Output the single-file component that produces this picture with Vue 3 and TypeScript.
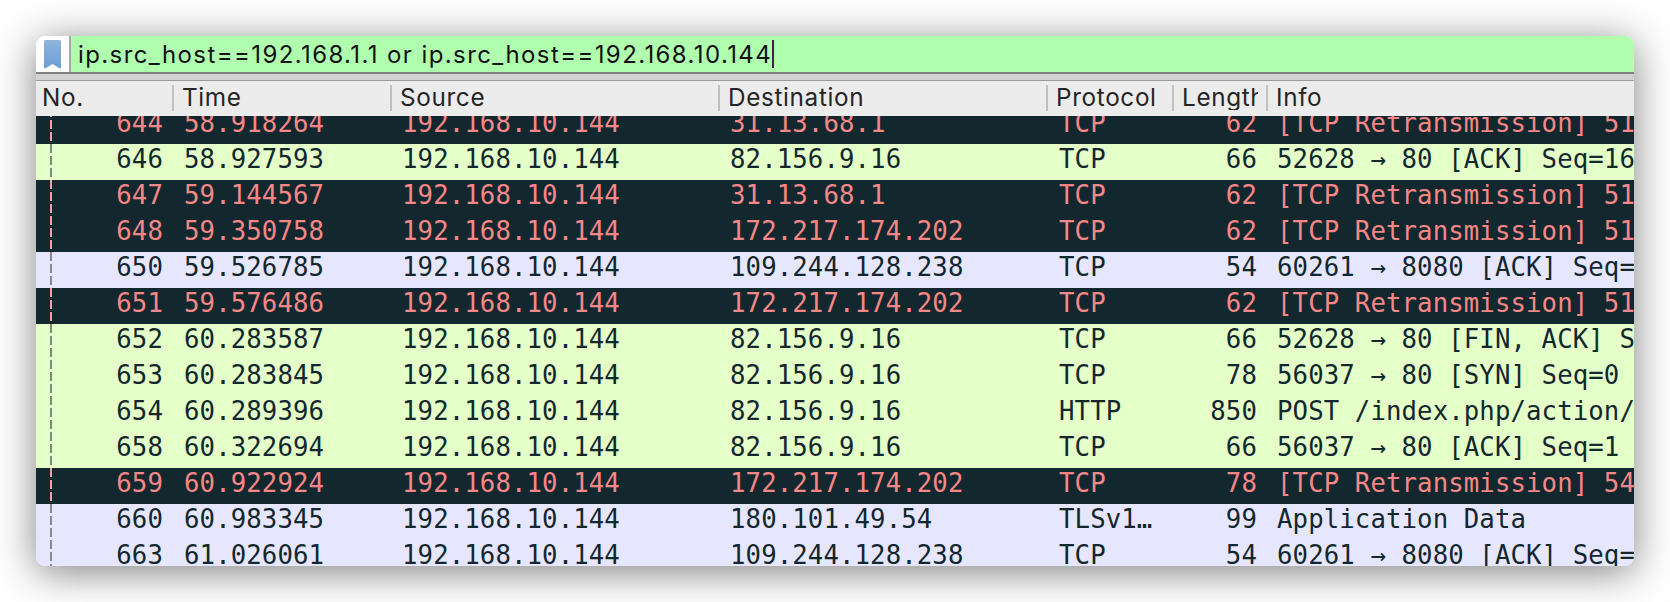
<template>
  <div class="page">
    <div class="window">
      <div class="filter-bar">
        <div class="bookmark">
          <svg width="17" height="29" viewBox="0 0 17 29">
            <defs>
              <linearGradient id="bm" x1="0" y1="0" x2="0" y2="1">
                <stop offset="0" stop-color="#8fb3dc" />
                <stop offset="1" stop-color="#6f9fd6" />
              </linearGradient>
            </defs>
            <path d="M1.5 0H15.500a1.500 1.500 0 0 1 1.500 1.500V27.500a1 1 0 0 1-1.500 .8L8.500 24 1.500 28.300A1 1 0 0 1 0 27.500V1.500A1.500 1.500 0 0 1 1.500 0Z" fill="url(#bm)" />
          </svg>
        </div>
        <div class="filter-input">
          <span>ip.src_host==192.168.1.1 or ip.src_host==192.168.10.144</span><i class="caret"></i>
        </div>
      </div>
      <div class="splitter"></div>
      <div class="head">
        <div v-for="c in columns" :key="c" class="head-cell">
          <span>{{ c }}</span>
        </div>
      </div>
      <div class="list">
        <div class="list-inner">
          <div v-for="p in packets" :key="p.no" class="row" :class="p.kind">
            <div class="cell num">{{ p.no }}</div>
            <div class="cell">{{ p.time }}</div>
            <div class="cell">{{ p.src }}</div>
            <div class="cell">{{ p.dst }}</div>
            <div class="cell proto">{{ p.proto }}</div>
            <div class="cell num">{{ p.len }}</div>
            <div class="cell info">{{ p.info }}</div>
          </div>
        </div>
      </div>
    </div>
  </div>
</template>

<script setup lang="ts">
type Kind = "bad" | "http" | "tcp";

interface Packet {
  no: number;
  time: string;
  src: string;
  dst: string;
  proto: string;
  len: number;
  info: string;
  kind: Kind;
}

const columns = ["No.", "Time", "Source", "Destination", "Protocol", "Length", "Info"];

const me = "192.168.10.144";
const packets: Packet[] = [
  { no: 644, time: "58.918264", src: me, dst: "31.13.68.1", proto: "TCP", len: 62, info: "[TCP Retransmission] 51", kind: "bad" },
  { no: 646, time: "58.927593", src: me, dst: "82.156.9.16", proto: "TCP", len: 66, info: "52628 → 80 [ACK] Seq=16", kind: "http" },
  { no: 647, time: "59.144567", src: me, dst: "31.13.68.1", proto: "TCP", len: 62, info: "[TCP Retransmission] 51", kind: "bad" },
  { no: 648, time: "59.350758", src: me, dst: "172.217.174.202", proto: "TCP", len: 62, info: "[TCP Retransmission] 51", kind: "bad" },
  { no: 650, time: "59.526785", src: me, dst: "109.244.128.238", proto: "TCP", len: 54, info: "60261 → 8080 [ACK] Seq=1", kind: "tcp" },
  { no: 651, time: "59.576486", src: me, dst: "172.217.174.202", proto: "TCP", len: 62, info: "[TCP Retransmission] 51", kind: "bad" },
  { no: 652, time: "60.283587", src: me, dst: "82.156.9.16", proto: "TCP", len: 66, info: "52628 → 80 [FIN, ACK] S", kind: "http" },
  { no: 653, time: "60.283845", src: me, dst: "82.156.9.16", proto: "TCP", len: 78, info: "56037 → 80 [SYN] Seq=0", kind: "http" },
  { no: 654, time: "60.289396", src: me, dst: "82.156.9.16", proto: "HTTP", len: 850, info: "POST /index.php/action/", kind: "http" },
  { no: 658, time: "60.322694", src: me, dst: "82.156.9.16", proto: "TCP", len: 66, info: "56037 → 80 [ACK] Seq=1", kind: "http" },
  { no: 659, time: "60.922924", src: me, dst: "172.217.174.202", proto: "TCP", len: 78, info: "[TCP Retransmission] 54", kind: "bad" },
  { no: 660, time: "60.983345", src: me, dst: "180.101.49.54", proto: "TLSv1…", len: 99, info: "Application Data", kind: "tcp" },
  { no: 663, time: "61.026061", src: me, dst: "109.244.128.238", proto: "TCP", len: 54, info: "60261 → 8080 [ACK] Seq=1", kind: "tcp" },
];
</script>

<style>
html,
body {
  margin: 0;
  background: #fff;
}
</style>

<style scoped>
.page {
  width: 1670px;
  height: 602px;
  padding: 36px;
  box-sizing: border-box;
  overflow: hidden;
}

.window {
  width: 1598px;
  height: 530px;
  border-radius: 9px;
  overflow: hidden;
  display: flex;
  flex-direction: column;
  box-shadow: 0 6px 40px rgba(0, 0, 0, 0.5);
  font-family: Inter, "Liberation Sans", sans-serif;
}

.filter-bar {
  height: 36px;
  display: flex;
  background: #afffaf;
  border-bottom: 2px solid #808080;
  flex: none;
}

.bookmark {
  width: 35px;
  background: #fff;
  border-right: 2px solid #a8a8a8;
  padding: 4px 0 0 8px;
  box-sizing: border-box;
}

.bookmark svg {
  display: block;
}

.filter-input {
  display: flex;
  align-items: center;
  padding-left: 7px;
  font-size: 24px;
  letter-spacing: 1.400px;
  color: #111;
  white-space: nowrap;
}

.caret {
  width: 1.500px;
  height: 28px;
  background: #4a1a55;
}

.splitter {
  height: 6px;
  background: #d2d2d2;
  border-bottom: 1px solid #9a9a9a;
  flex: none;
}

.head {
  height: 35px;
  display: grid;
  grid-template-columns: 138px 218px 328px 328px 126px 94px 1fr;
  background: #ececec;
  flex: none;
}

.head-cell {
  margin: 4px 0 5px;
  padding: 0 8px 0 8px;
  white-space: nowrap;
  font-size: 24.300px;
  letter-spacing: 0.650px;
  line-height: 25px;
  color: #252525;
  border-right: 2px solid #c0c0c0;
  box-sizing: border-box;
  min-width: 0;
}

.head-cell:first-child {
  padding-left: 6px;
}

.head-cell:last-child {
  border-right: none;
}

.head-cell span {
  display: block;
  overflow: hidden;
}

.list {
  flex: 1;
  overflow: hidden;
}

.list-inner {
  margin-top: -8px;
}

.row {
  position: relative;
  height: 36px;
  display: grid;
  grid-template-columns: 138px 218px 328px 328px 126px 94px 1fr;
  font-family: "DejaVu Sans Mono", "Liberation Mono", monospace;
  font-size: 25.700px;
  letter-spacing: 0.100px;
  line-height: 30px;
  white-space: nowrap;
}

/* 会话关联线 */
.row::before {
  content: "";
  position: absolute;
  left: 14px;
  top: 0;
  bottom: 0;
  width: 2px;
  background: repeating-linear-gradient(to bottom, var(--dash) 0 9px, transparent 9px 12px);
}

.row.bad {
  background: #12272e;
  color: #f78787;
  --dash: #f3a0a0;
}

.row.http {
  background: #e4ffc7;
  color: #12272e;
  --dash: #7d8a86;
}

.row.tcp {
  background: #e7e6ff;
  color: #12272e;
  --dash: #8a8a96;
}

.cell {
  padding-left: 10px;
  overflow: hidden;
}

.cell.num {
  padding-left: 0;
  padding-right: 11px;
  text-align: right;
}

.cell.proto {
  padding-left: 11px;
}

.cell.info {
  padding-left: 9px;
}
</style>
